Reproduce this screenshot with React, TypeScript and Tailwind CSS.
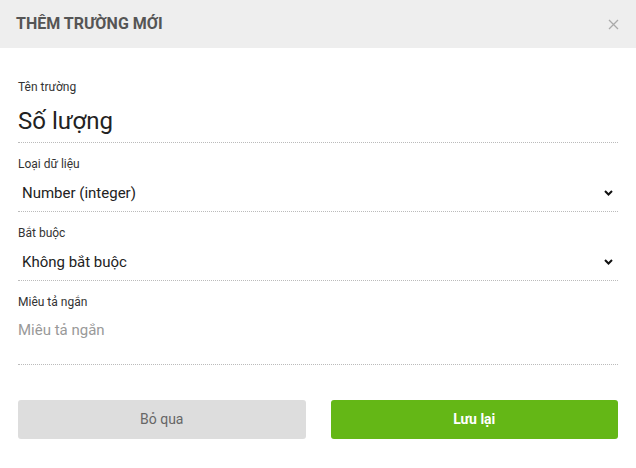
export default function App() {
  return (
    <div className="w-[636px] h-[468px] bg-white font-['Roboto',sans-serif] text-[#222]">
      <div className="h-12 bg-[#eeeeee] flex items-center justify-between pl-4 pr-[17px]">
        <h1 className="text-[16px] font-bold text-[#555]">THÊM TRƯỜNG MỚI</h1>
        <svg width="11" height="11" viewBox="0 0 11 11" className="text-[#aaa]">
          <path d="M1 1L10 10M10 1L1 10" stroke="currentColor" strokeWidth="1.3" />
        </svg>
      </div>
      <div className="px-[18px] pt-[31px]">
        <div>
          <label className="block h-4 text-[12px] leading-4 text-[#333]">Tên trường</label>
          <div className="h-[48px] pt-[10px] border-b border-dotted border-[#bbb]">
            <div className="text-[24px] leading-8 text-[#222]">Số lượng</div>
          </div>
        </div>
        <div className="mt-[13px]">
          <label className="block h-4 text-[12px] leading-4 text-[#333]">Loại dữ liệu</label>
          <div className="h-[40px] pl-1 pr-[5px] flex items-center justify-between border-b border-dotted border-[#bbb]">
            <span className="text-[15px] text-[#222] pt-[4px]">Number (integer)</span>
            <Chevron />
          </div>
        </div>
        <div className="mt-[13px]">
          <label className="block h-4 text-[12px] leading-4 text-[#333]">Bắt buộc</label>
          <div className="h-[40px] pl-1 pr-[5px] flex items-center justify-between border-b border-dotted border-[#bbb]">
            <span className="text-[15px] text-[#222] pt-[4px]">Không bắt buộc</span>
            <Chevron />
          </div>
        </div>
        <div className="mt-[13px]">
          <label className="block h-4 text-[12px] leading-4 text-[#333]">Miêu tả ngắn</label>
          <div className="h-[55px] pt-[10px] border-b border-dotted border-[#bbb]">
            <div className="text-[15px] leading-5 text-[#999]">Miêu tả ngắn</div>
          </div>
        </div>
        <div className="mt-[35px] flex gap-[25px]">
          <button className="flex-1 h-[39px] rounded-[3px] bg-[#dddddd] text-[14px] text-[#666]">Bỏ qua</button>
          <button className="flex-1 h-[39px] rounded-[3px] bg-[#64b716] text-[14px] font-bold text-white">Lưu lại</button>
        </div>
      </div>
    </div>
  );
}

function Chevron() {
  return (
    <svg width="9" height="6" viewBox="0 0 9 6" className="text-[#111] mt-[2px]">
      <path d="M1 1L4.5 4.5L8 1" stroke="currentColor" strokeWidth="2" fill="none" />
    </svg>
  );
}
